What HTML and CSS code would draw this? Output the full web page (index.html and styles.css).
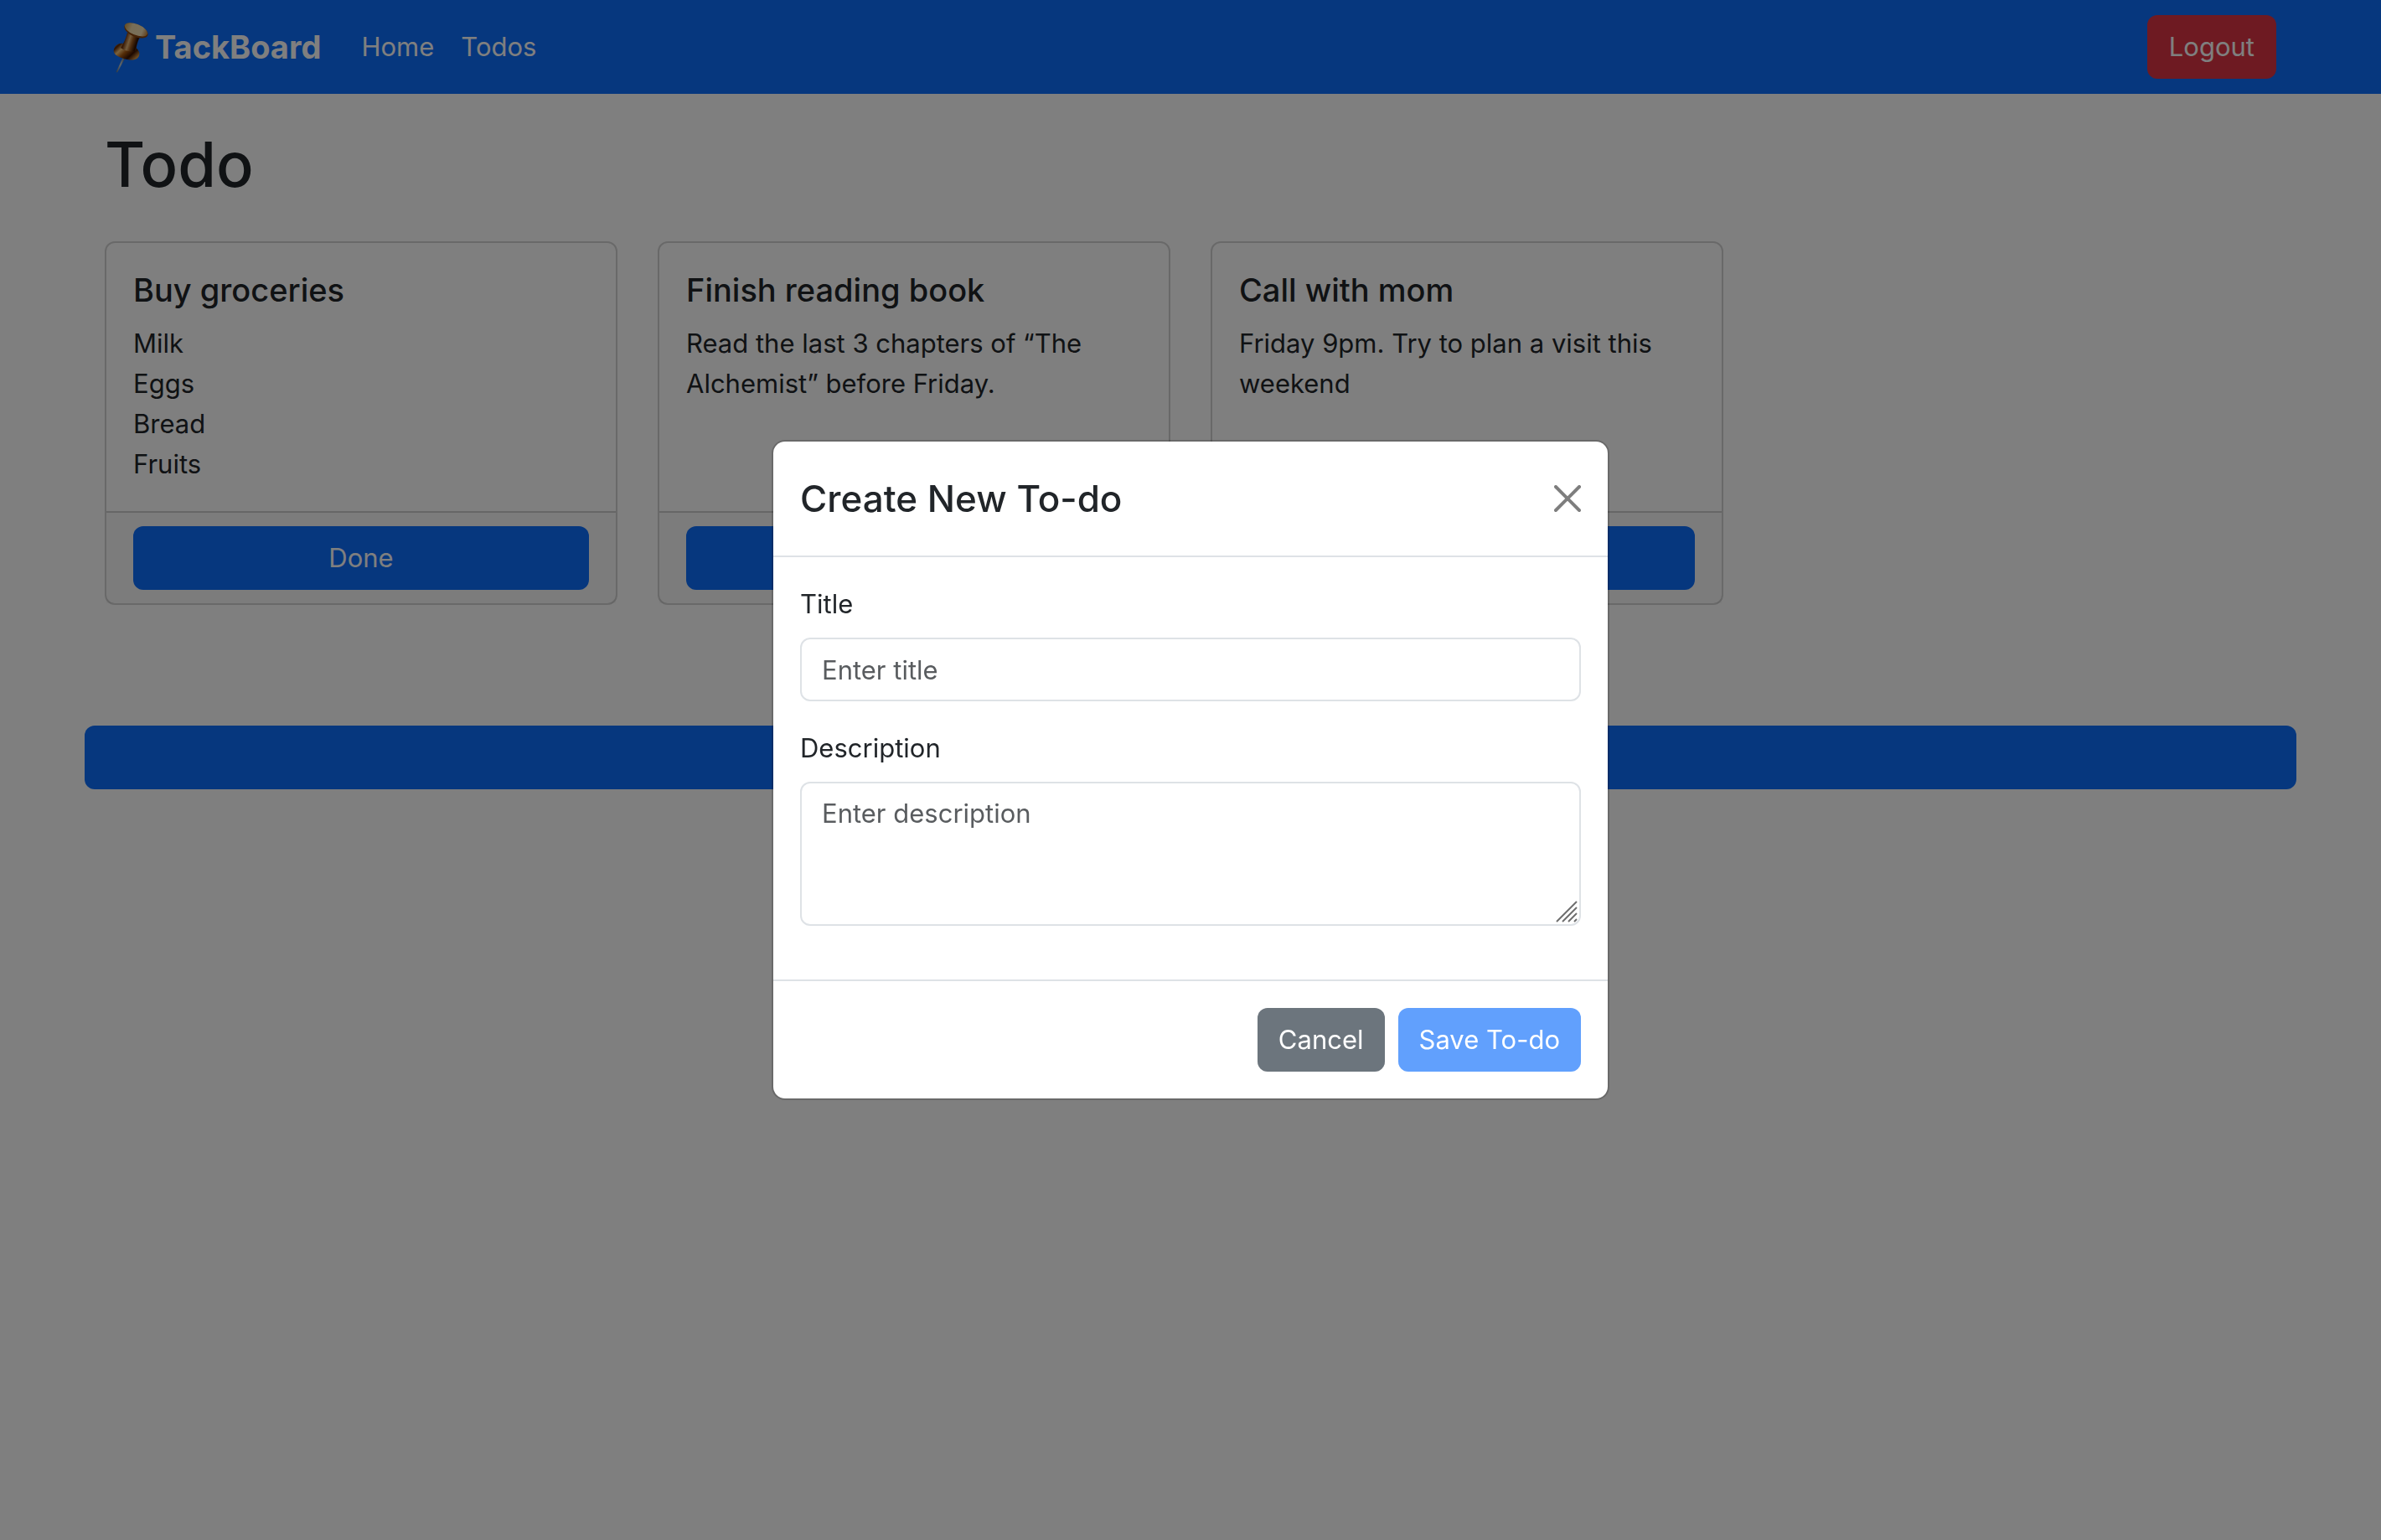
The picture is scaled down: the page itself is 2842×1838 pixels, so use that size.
FILE: index.html
```html
<!DOCTYPE html>
<html lang="en">
<head>
<meta charset="utf-8">
<meta name="viewport" content="width=device-width, initial-scale=1">
<title>TackBoard</title>
<link rel="stylesheet" href="styles.css">
</head>
<body>
<header class="navbar">
  <div class="container navbar-row">
    <a class="brand" href="#">
      <svg class="pin" viewBox="1 0 42 64" aria-hidden="true">
        <defs>
          <linearGradient id="needle" x1="0" x2="1"><stop offset="0" stop-color="#5c6f80"/><stop offset=".5" stop-color="#c4d0d8"/><stop offset="1" stop-color="#4a5a68"/></linearGradient>
          <linearGradient id="neck" x1="0" y1=".3" x2="1" y2=".6"><stop offset="0" stop-color="#c07a2c"/><stop offset=".2" stop-color="#6b2c06"/><stop offset=".42" stop-color="#e8b878"/><stop offset=".58" stop-color="#a05c20"/><stop offset=".8" stop-color="#2c0d00"/><stop offset="1" stop-color="#c87a28"/></linearGradient>
          <linearGradient id="base" x1="0" y1="0" x2="1" y2=".7"><stop offset="0" stop-color="#f0b860"/><stop offset=".18" stop-color="#5c2404"/><stop offset=".36" stop-color="#f6c67c"/><stop offset=".55" stop-color="#a8580f"/><stop offset=".78" stop-color="#3a1200"/><stop offset="1" stop-color="#d89440"/></linearGradient>
          <linearGradient id="cap" x1="0" y1="0" x2="1" y2="0"><stop offset="0" stop-color="#c89848"/><stop offset=".3" stop-color="#f0dcae"/><stop offset=".75" stop-color="#f4e0b4"/><stop offset="1" stop-color="#c08038"/></linearGradient>
        </defs>
        <path d="M13 44 L15.500 45 L6 62.500 L4.500 62 Z" fill="url(#needle)"/>
        <path d="M2 35 C3 30 8 27 13 28 C22 28 32 33 32.500 40 C32 47 26 48.500 18 47 C8 45 0 41 2 35 Z" fill="url(#base)"/>
        <path d="M18 15 L34 19 C30 25 29 31 28.500 36 C23 39 15 37 10 33 C14 27 16 22 18 15 Z" fill="url(#neck)"/>
        <ellipse cx="28.500" cy="12.500" rx="15" ry="7.500" transform="rotate(23 28.500 12.500)" fill="#8a440c"/>
        <ellipse cx="28.500" cy="11.300" rx="14.500" ry="6.500" transform="rotate(22 28.500 11.300)" fill="url(#cap)"/>
      </svg>TackBoard</a>
    <nav class="nav-links">
      <a href="#">Home</a>
      <a href="#">Todos</a>
    </nav>
    <button class="btn btn-danger" type="button">Logout</button>
  </div>
</header>

<main class="container board">
  <h1>Todo</h1>
  <section class="cards">
    <article class="card">
      <div class="card-body">
        <h2>Buy groceries</h2>
        <p>Milk<br>Eggs<br>Bread<br>Fruits</p>
      </div>
      <div class="card-footer"><button class="btn btn-primary" type="button">Done</button></div>
    </article>
    <article class="card">
      <div class="card-body">
        <h2>Finish reading book</h2>
        <p>Read the last 3 chapters of “The Alchemist” before Friday.</p>
      </div>
      <div class="card-footer"><button class="btn btn-primary" type="button">Done</button></div>
    </article>
    <article class="card">
      <div class="card-body">
        <h2>Call with mom</h2>
        <p>Friday 9pm. Try to plan a visit this weekend</p>
      </div>
      <div class="card-footer"><button class="btn btn-primary" type="button">Done</button></div>
    </article>
  </section>
  <button class="btn btn-primary btn-create" type="button">Create New To-do</button>
</main>

<div class="backdrop">
  <form class="modal" role="dialog" aria-modal="true" aria-labelledby="modal-title">
    <div class="modal-header">
      <h2 id="modal-title">Create New To-do</h2>
      <button class="close" type="button" aria-label="Close">
        <svg viewBox="0 0 16 16" aria-hidden="true"><path d="M.293.293a1 1 0 0 1 1.414 0L8 6.586 14.293.293a1 1 0 1 1 1.414 1.414L9.414 8l6.293 6.293a1 1 0 0 1-1.414 1.414L8 9.414l-6.293 6.293a1 1 0 0 1-1.414-1.414L6.586 8 .293 1.707a1 1 0 0 1 0-1.414z"/></svg>
      </button>
    </div>
    <div class="modal-body">
      <div class="field">
        <label for="title">Title</label>
        <input id="title" type="text" placeholder="Enter title">
      </div>
      <div class="field">
        <label for="description">Description</label>
        <div class="textarea-wrap">
          <textarea id="description" rows="3" placeholder="Enter description"></textarea>
          <svg class="grip" viewBox="0 0 26 26" aria-hidden="true"><path d="M1 25 25 1M8 25 25 8M15 25 25 15M22 25 25 22"/></svg>
        </div>
      </div>
    </div>
    <div class="modal-footer">
      <button class="btn btn-secondary" type="button">Cancel</button>
      <button class="btn btn-primary" type="submit" disabled>Save To-do</button>
    </div>
  </form>
</div>
</body>
</html>
```
FILE: styles.css
```css
*, *::before, *::after { box-sizing: border-box; }

body {
  margin: 0;
  background: #fff;
  color: #212529;
  font: 400 31px/48px Inter, "Liberation Sans", sans-serif;
}

h1, h2, p { margin: 0; }
h1, h2 { font-weight: 500; }

.container {
  width: 100%;
  max-width: 2640px;
  margin: 0 auto;
  padding: 0 24px;
}

.btn {
  padding: 12px 24px;
  border: 2px solid transparent;
  border-radius: 12px;
  color: #fff;
  font: inherit;
  text-align: center;
}
.btn-primary { background-color: #0d6efd; }
.btn-primary:disabled { opacity: .65; }
.btn-secondary { background-color: #6c757d; }
.btn-danger { background-color: #dc3545; }

.navbar { padding: 18px 0; background: #0d6efd; }
.navbar-row { display: flex; align-items: center; }
.brand {
  display: flex;
  align-items: center;
  gap: 8px;
  padding-left: 10px;
  color: #fff;
  font-size: 38px;
  font-weight: 700;
  text-decoration: none;
}
.pin { width: 42px; height: 64px; }
.nav-links { display: flex; gap: 32px; margin-left: 48px; }
.nav-links a { color: #fff; text-decoration: none; }
.navbar .btn { margin-left: auto; }

.board { padding-top: 36px; }
.board h1 { font-size: 74px; line-height: 96px; }
.cards {
  display: grid;
  grid-template-columns: repeat(4, 1fr);
  gap: 48px;
  margin-top: 44px;
}
.card {
  display: flex;
  flex-direction: column;
  border: 2px solid rgba(0, 0, 0, .175);
  border-radius: 12px;
}
.card-body { flex: 1; padding: 32px; }
.card h2 { margin-bottom: 16px; font-size: 38px; }
.card-footer {
  display: flex;
  padding: 16px 32px;
  border-top: 2px solid rgba(0, 0, 0, .175);
  background: rgba(33, 37, 41, .03);
}
.card-footer .btn { flex: 1; }
.btn-create { display: block; width: calc(100% + 48px); margin: 144px -24px 0; }

.backdrop {
  position: fixed;
  inset: 0;
  display: flex;
  align-items: center;
  justify-content: center;
  background: rgba(0, 0, 0, .5);
}
.modal {
  width: 100%;
  max-width: 1000px;
  border: 2px solid rgba(0, 0, 0, .175);
  border-radius: 16px;
  background: #fff;
  background-clip: padding-box;
}
.modal-header {
  display: flex;
  align-items: center;
  justify-content: space-between;
  padding: 32px;
  border-bottom: 2px solid #dee2e6;
}
.modal-header h2 { font-size: 44px; line-height: 72px; }
.close { display: flex; padding: 0; border: 0; background: none; opacity: .5; }
.close svg { width: 32px; height: 32px; }
.modal-body { padding: 32px; }
.field { margin-bottom: 32px; }
.field label { display: block; margin-bottom: 16px; }
.field input, .field textarea {
  display: block;
  width: 100%;
  margin: 0;
  padding: 12px 24px;
  border: 2px solid #dee2e6;
  border-radius: 12px;
  background: #fff;
  color: #212529;
  font: inherit;
}
.field input { height: 76px; }
.field textarea { resize: vertical; }
.field textarea::-webkit-resizer { display: none; }
.field ::placeholder { color: rgba(33, 37, 41, .75); opacity: 1; }
.textarea-wrap { position: relative; }
.grip {
  position: absolute;
  right: 4px;
  bottom: 4px;
  width: 26px;
  height: 26px;
  fill: none;
  stroke: #6e6e6e;
  stroke-width: 2;
  pointer-events: none;
}
.modal-footer {
  display: flex;
  justify-content: flex-end;
  gap: 16px;
  padding: 32px;
  border-top: 2px solid #dee2e6;
}
.modal-footer .btn { padding: 12px 23px; }
```
